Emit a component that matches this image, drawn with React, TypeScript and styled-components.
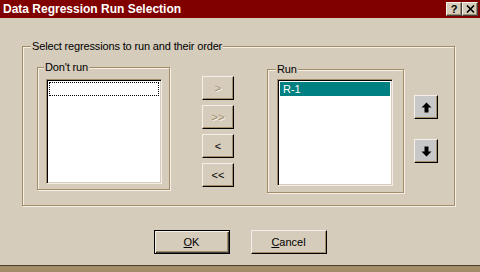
import React from "react";
import styled, { createGlobalStyle } from "styled-components";

const face = "#d5ccbb";
const shadow = "#a28d68";
const light = "#f4f0e8";

const GlobalStyle = createGlobalStyle`
  html, body {
    margin: 0;
    padding: 0;
    background: ${face};
  }
  * {
    box-sizing: border-box;
  }
`;

const Window = styled.div`
  width: 480px;
  height: 272px;
  display: flex;
  flex-direction: column;
  background: ${face};
  font-family: "Liberation Sans", Arial, sans-serif;
  font-size: 11px;
  color: #000;
  overflow: hidden;
`;

const TitleBar = styled.div`
  height: 18px;
  flex: 0 0 18px;
  background: #800000;
  display: flex;
  align-items: center;
  padding: 0 2px 0 3px;
`;

const Title = styled.div`
  flex: 1;
  color: #fff;
  font-weight: 700;
  font-size: 12px;
  line-height: 18px;
`;

const CaptionButton = styled.div`
  width: 16px;
  height: 14px;
  background: ${face};
  border-top: 1px solid ${light};
  border-left: 1px solid ${light};
  border-right: 1px solid #404040;
  border-bottom: 1px solid #404040;
  box-shadow: inset -1px -1px 0 ${shadow};
  display: flex;
  align-items: center;
  justify-content: center;
  font-weight: 700;
  font-size: 11px;
  line-height: 1;
  color: #000;
`;

const Body = styled.div`
  flex: 1;
  display: flex;
  flex-direction: column;
  padding: 28px 0 0 22px;
`;

const Group = styled.div<{ $w: number; $h: number; $pad: string }>`
  position: relative;
  width: ${(p) => p.$w}px;
  height: ${(p) => p.$h}px;
  padding: ${(p) => p.$pad};
  border: 1px solid ${shadow};
  box-shadow: inset 1px 1px 0 ${light}, 1px 1px 0 ${light};
  display: flex;
  align-items: flex-start;
`;

const Caption = styled.span<{ $left: number }>`
  position: absolute;
  top: -8px;
  left: ${(p) => p.$left - 1}px;
  padding: 0 1px;
  background: ${face};
  line-height: 14px;
  font-size: 11px;
  letter-spacing: -0.15px;
  white-space: nowrap;
`;

const ListBox = styled.div<{ $w: number; $h: number }>`
  width: ${(p) => p.$w}px;
  height: ${(p) => p.$h}px;
  background: #fff;
  border-top: 1px solid ${shadow};
  border-left: 1px solid ${shadow};
  border-right: 1px solid ${light};
  border-bottom: 1px solid ${light};
  box-shadow: inset 1px 1px 0 #000, inset -1px -1px 0 ${face};
  padding: 2px;
`;

const ListItem = styled.div<{ $selected?: boolean; $focus?: boolean }>`
  height: 14px;
  line-height: 13px;
  padding-left: 2px;
  font-size: 11px;
  color: ${(p) => (p.$selected ? "#fff" : "#000")};
  background: ${(p) => (p.$selected ? "#008080" : "transparent")};
  border: 1px ${(p) => (p.$focus ? "dotted #000" : "solid transparent")};
`;

const ButtonColumn = styled.div<{ $gap: number; $top: number; $left: number }>`
  display: flex;
  flex-direction: column;
  gap: ${(p) => p.$gap}px;
  margin-top: ${(p) => p.$top}px;
  margin-left: ${(p) => p.$left}px;
`;

const Button = styled.button<{ $w: number; $h: number; $default?: boolean; $gray?: boolean }>`
  width: ${(p) => p.$w}px;
  height: ${(p) => p.$h}px;
  padding: 0;
  margin: 0;
  font-family: "Liberation Sans", Arial, sans-serif;
  font-size: 11px;
  color: #000;
  background: ${(p) => (p.$gray ? "#c8c8c8" : face)};
  border-top: 1px solid ${(p) => (p.$default ? "#000" : light)};
  border-left: 1px solid ${(p) => (p.$default ? "#000" : light)};
  border-right: 1px solid #000;
  border-bottom: 1px solid #000;
  box-shadow: ${(p) =>
    p.$default
      ? `inset 1px 1px 0 ${light}, inset -1px -1px 0 #404040, inset -2px -2px 0 ${shadow}`
      : `inset -1px -1px 0 ${shadow}`};
  display: flex;
  align-items: center;
  justify-content: center;
  outline: none;

  &:disabled {
    color: ${shadow};
    text-shadow: 1px 1px 0 ${light};
  }

  u {
    text-decoration: underline;
    text-underline-offset: 1px;
  }
`;

const Footer = styled.div`
  display: flex;
  justify-content: center;
  gap: 21px;
  margin: 24px 0 0 -22px;
`;

const Frame = styled.div`
  margin-top: auto;
  height: 7px;
  flex: 0 0 7px;
  background: ${shadow};
  border-top: 1px solid #4a3f2c;
`;

const Arrow = ({ down }: { down?: boolean }) => (
  <svg width="11" height="11" viewBox="0 0 11 11" style={{ transform: down ? "rotate(180deg)" : undefined }}>
    <path d="M5.5 0.5 L10.5 5.5 L7.5 5.5 L7.5 10.5 L3.5 10.5 L3.5 5.5 L0.5 5.5 Z" fill="#000" />
  </svg>
);

const CloseGlyph = () => (
  <svg width="9" height="8" viewBox="0 0 9 8">
    <path d="M1 0.5 L8 7.5 M8 0.5 L1 7.5" stroke="#000" strokeWidth="1.6" />
  </svg>
);

export default function App() {
  return (
    <>
      <GlobalStyle />
      <Window>
        <TitleBar>
          <Title>Data Regression Run Selection</Title>
          <CaptionButton>?</CaptionButton>
          <CaptionButton>
            <CloseGlyph />
          </CaptionButton>
        </TitleBar>
        <Body>
          <Group $w={433} $h={160} $pad="20px 0 0 14px">
            <Caption $left={9}>Select regressions to run and their order</Caption>
            <Group $w={133} $h={123} $pad="11px 0 0 8px">
              <Caption $left={7}>Don&apos;t run</Caption>
              <ListBox $w={116} $h={105}>
                <ListItem $focus />
              </ListBox>
            </Group>
            <ButtonColumn $gap={5} $top={9} $left={32}>
              <Button $w={32} $h={24} disabled>&gt;</Button>
              <Button $w={32} $h={24} disabled>&gt;&gt;</Button>
              <Button $w={32} $h={24}>&lt;</Button>
              <Button $w={32} $h={24}>&lt;&lt;</Button>
            </ButtonColumn>
            <Group $w={137} $h={124} $pad="9px 0 0 9px" style={{ marginLeft: 33, marginTop: 2 }}>
              <Caption $left={9}>Run</Caption>
              <ListBox $w={116} $h={107}>
                <ListItem $selected>R-1</ListItem>
              </ListBox>
            </Group>
            <ButtonColumn $gap={20} $top={28} $left={10}>
              <Button $w={24} $h={24} $gray>
                <Arrow />
              </Button>
              <Button $w={24} $h={24} $gray>
                <Arrow down />
              </Button>
            </ButtonColumn>
          </Group>
          <Footer>
            <Button $w={76} $h={24} $default>
              <u>O</u>K
            </Button>
            <Button $w={76} $h={24}>
              <u>C</u>ancel
            </Button>
          </Footer>
        </Body>
        <Frame />
      </Window>
    </>
  );
}
